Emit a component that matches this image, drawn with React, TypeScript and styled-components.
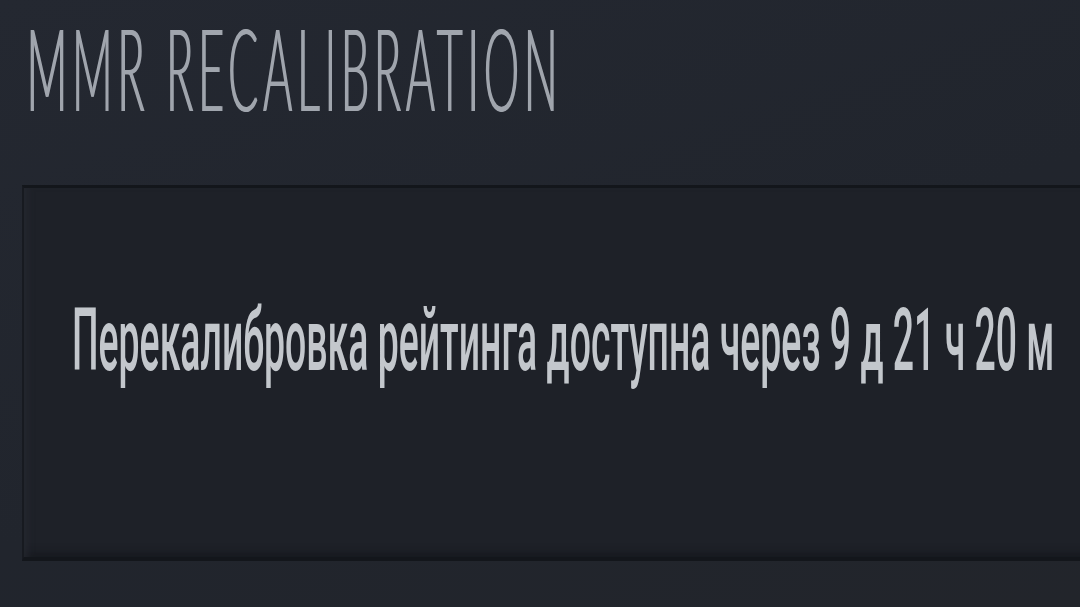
import React from "react";
import styled, { createGlobalStyle } from "styled-components";

const GlobalStyle = createGlobalStyle`
  html, body {
    margin: 0;
    padding: 0;
    height: 100%;
    overflow: hidden;
    background: #22262e;
  }
  #root {
    height: 100%;
  }
`;

const Page = styled.div`
  height: 100%;
  box-sizing: border-box;
  padding: 0 0 0 22px;
  background: linear-gradient(160deg, #242831 0%, #21252d 55%, #22252b 100%);
  display: flex;
  flex-direction: column;
`;

const Title = styled.h1`
  margin: 0;
  height: 185px;
  padding: 9px 0 0 4px;
  box-sizing: border-box;
  overflow: hidden;
  font-family: "Lato", "DejaVu Sans", sans-serif;
  font-weight: 300;
  font-size: 115px;
  line-height: 1;
  letter-spacing: 12px;
  color: #a0a5ad;
  text-shadow: 3px 0 0 #a0a5ad;
  white-space: nowrap;
`;

/* narrow face: the glyphs are squeezed horizontally from the left edge */
const Condensed = styled.span<{ $scale: number }>`
  display: inline-block;
  transform: scaleX(${(p) => p.$scale});
  transform-origin: left center;
`;

const Panel = styled.section`
  height: 376px;
  margin-right: -40px;
  box-sizing: border-box;
  background: #1e2128;
  border-top: 3px solid #13161b;
  border-bottom: 4px solid #13161b;
  border-left: 2px solid #171a20;
  box-shadow: inset 8px 0 6px -4px rgba(40, 44, 52, 0.6),
    inset 0 -10px 10px -6px rgba(12, 14, 18, 0.4);
  padding: 109px 0 0 48px;
  overflow: hidden;
`;

const Message = styled.p`
  margin: 0;
  font-family: "Roboto", "Liberation Sans", sans-serif;
  font-weight: 500;
  font-size: 87px;
  line-height: 1;
  color: #c3c7cc;
  white-space: nowrap;
`;

export default function App() {
  return (
    <>
      <GlobalStyle />
      <Page>
        <Title>
          <Condensed $scale={0.39}>MMR RECALIBRATION</Condensed>
        </Title>
        <Panel>
          <Message>
            <Condensed $scale={0.43}>
              Перекалибровка рейтинга доступна через 9 д 21 ч 20 м
            </Condensed>
          </Message>
        </Panel>
      </Page>
    </>
  );
}
